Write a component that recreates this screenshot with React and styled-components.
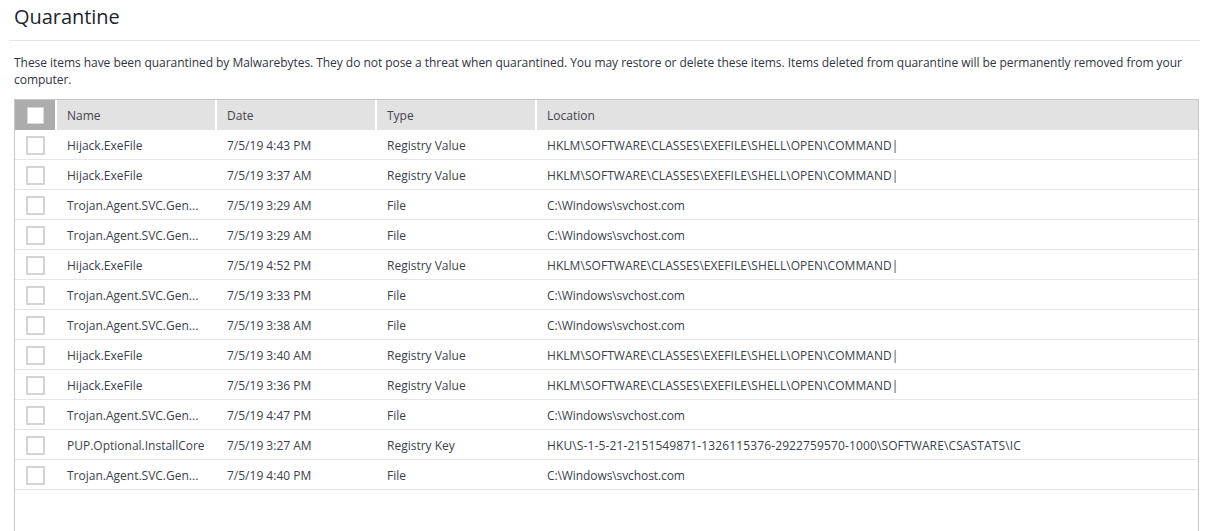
import React from 'react';
import styled, { createGlobalStyle } from 'styled-components';

const GlobalStyle = createGlobalStyle`
  html, body {
    margin: 0;
    padding: 0;
    height: 100%;
    overflow: hidden;
    background: #fff;
    font-family: "Open Sans", "Liberation Sans", sans-serif;
  }
`;

const Page = styled.div`
  width: 1209px;
  height: 531px;
  overflow: hidden;
  padding: 0 9px;
  box-sizing: border-box;
`;

const Header = styled.div`
  height: 41px;
  width: 1191px;
  box-sizing: border-box;
  padding: 3px 0 0 5px;
  border-bottom: 1px solid #e4e4e4;
`;

const Title = styled.h1`
  margin: 0;
  font-size: 20px;
  line-height: 28px;
  font-weight: 400;
  letter-spacing: -0.05px;
  color: #1c2530;
`;

const Intro = styled.p`
  margin: 0;
  padding: 13px 5px 0;
  height: 58px;
  box-sizing: border-box;
  font-size: 12px;
  line-height: 17px;
  letter-spacing: -0.045px;
  color: #2f3442;
`;

const Table = styled.div`
  width: 1185px;
  margin-left: 5px;
  height: 450px;
  box-sizing: border-box;
  border: 1px solid #c8c8c8;
  border-bottom: none;
`;

const Row = styled.div`
  display: grid;
  grid-template-columns: 40px 160px 160px 160px 1fr;
  height: 30px;
  box-sizing: border-box;
  align-items: center;
  font-size: 12px;
  color: #3a3f4c;
  border-bottom: 1px solid #e6e6e6;
`;

const HeadRow = styled(Row)`
  border-bottom: none;
  align-items: stretch;
`;

const HeadCell = styled.div`
  display: flex;
  align-items: center;
  background: #e2e2e2;
  color: #43444e;
  padding-left: 10px;
  margin-left: 2px;
`;

const CheckHead = styled.div`
  display: flex;
  align-items: center;
  justify-content: center;
  background: #acacac;
`;

const CheckCell = styled.div`
  display: flex;
  align-items: center;
  justify-content: center;
  padding-top: 1px;
`;

const Box = styled.span`
  display: block;
  box-sizing: border-box;
  width: ${props => (props.$head ? '17px' : '19px')};
  height: ${props => (props.$head ? '17px' : '19px')};
  background: #fff;
  border: ${props => (props.$head ? '1px solid #d3d9e0' : '2px solid #d2d4d7')};
  border-radius: 1px;
`;

const Cell = styled.div`
  padding: 2px 0 0 12px;
  white-space: nowrap;
  overflow: hidden;
  letter-spacing: ${props => props.$spacing || '0'};
`;

const COMMAND = 'HKLM\\SOFTWARE\\CLASSES\\EXEFILE\\SHELL\\OPEN\\COMMAND|';
const SVCHOST = 'C:\\Windows\\svchost.com';
const TROJAN = 'Trojan.Agent.SVC.Gen...';
const HIJACK = 'Hijack.ExeFile';

const locationSpacing = {
  [COMMAND]: '0.05px',
  [SVCHOST]: '-0.09px',
};

const items = [
  { name: HIJACK, date: '7/5/19 4:43 PM', type: 'Registry Value', location: COMMAND },
  { name: HIJACK, date: '7/5/19 3:37 AM', type: 'Registry Value', location: COMMAND },
  { name: TROJAN, date: '7/5/19 3:29 AM', type: 'File', location: SVCHOST },
  { name: TROJAN, date: '7/5/19 3:29 AM', type: 'File', location: SVCHOST },
  { name: HIJACK, date: '7/5/19 4:52 PM', type: 'Registry Value', location: COMMAND },
  { name: TROJAN, date: '7/5/19 3:33 PM', type: 'File', location: SVCHOST },
  { name: TROJAN, date: '7/5/19 3:38 AM', type: 'File', location: SVCHOST },
  { name: HIJACK, date: '7/5/19 3:40 AM', type: 'Registry Value', location: COMMAND },
  { name: HIJACK, date: '7/5/19 3:36 PM', type: 'Registry Value', location: COMMAND },
  { name: TROJAN, date: '7/5/19 4:47 PM', type: 'File', location: SVCHOST },
  {
    name: 'PUP.Optional.InstallCore',
    date: '7/5/19 3:27 AM',
    type: 'Registry Key',
    location: 'HKU\\S-1-5-21-2151549871-1326115376-2922759570-1000\\SOFTWARE\\CSASTATS\\IC',
  },
  { name: TROJAN, date: '7/5/19 4:40 PM', type: 'File', location: SVCHOST },
];

export default function App() {
  return (
    <Page>
      <GlobalStyle />
      <Header>
        <Title>Quarantine</Title>
      </Header>
      <Intro>
        These items have been quarantined by Malwarebytes. They do not pose a threat when quarantined. You may restore
        or delete these items. Items deleted from quarantine will be permanently removed from your computer.
      </Intro>
      <Table>
        <HeadRow>
          <CheckHead>
            <Box $head />
          </CheckHead>
          <HeadCell>Name</HeadCell>
          <HeadCell>Date</HeadCell>
          <HeadCell>Type</HeadCell>
          <HeadCell>Location</HeadCell>
        </HeadRow>
        {items.map((item, i) => (
          <Row key={i}>
            <CheckCell>
              <Box />
            </CheckCell>
            <Cell>{item.name}</Cell>
            <Cell>{item.date}</Cell>
            <Cell>{item.type}</Cell>
            <Cell $spacing={locationSpacing[item.location] || '0.125px'}>{item.location}</Cell>
          </Row>
        ))}
      </Table>
    </Page>
  );
}
